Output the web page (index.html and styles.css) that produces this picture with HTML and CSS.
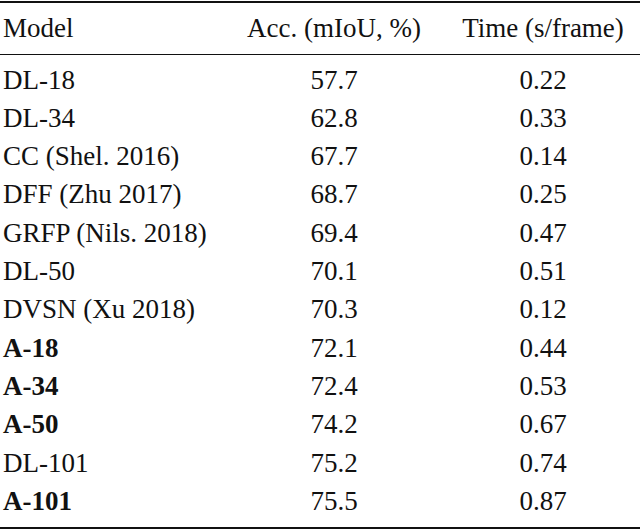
FILE: index.html
```html
<!DOCTYPE html>
<html>
<head>
<meta charset="utf-8">
<link rel="stylesheet" href="styles.css">
</head>
<body>
<table class="results">
  <colgroup>
    <col class="c-model">
    <col class="c-acc">
    <col class="c-time">
  </colgroup>
  <thead>
    <tr><th class="model">Model</th><th>Acc. (mIoU, %)</th><th>Time (s/frame)</th></tr>
  </thead>
  <tbody>
    <tr class="first"><td class="model">DL-18</td><td>57.7</td><td>0.22</td></tr>
    <tr><td class="model">DL-34</td><td>62.8</td><td>0.33</td></tr>
    <tr><td class="model">CC (Shel. 2016)</td><td>67.7</td><td>0.14</td></tr>
    <tr><td class="model">DFF (Zhu 2017)</td><td>68.7</td><td>0.25</td></tr>
    <tr><td class="model">GRFP (Nils. 2018)</td><td>69.4</td><td>0.47</td></tr>
    <tr><td class="model">DL-50</td><td>70.1</td><td>0.51</td></tr>
    <tr><td class="model">DVSN (Xu 2018)</td><td>70.3</td><td>0.12</td></tr>
    <tr><td class="model bold">A-18</td><td>72.1</td><td>0.44</td></tr>
    <tr><td class="model bold">A-34</td><td>72.4</td><td>0.53</td></tr>
    <tr><td class="model bold">A-50</td><td>74.2</td><td>0.67</td></tr>
    <tr><td class="model">DL-101</td><td>75.2</td><td>0.74</td></tr>
    <tr class="last"><td class="model bold">A-101</td><td>75.5</td><td>0.87</td></tr>
  </tbody>
</table>
</body>
</html>
```
FILE: styles.css
```css
html, body {
  margin: 0;
  padding: 0;
  background: #fff;
}
body {
  font-family: "Liberation Serif", "Times New Roman", serif;
  font-size: 27px;
  color: #111;
}
.results {
  width: 640px;
  border-collapse: collapse;
  table-layout: fixed;
  margin-top: 1px;
  border-top: 2px solid #111;
  border-bottom: 2.5px solid #111;
}
.c-model { width: 222px; }
.c-acc { width: 224px; }
.c-time { width: 194px; }
.results th,
.results td {
  padding: 0;
  line-height: 38.3px;
  text-align: center;
  font-weight: normal;
  white-space: nowrap;
}
.results .model {
  text-align: left;
  padding-left: 3px;
}
.results thead th {
  line-height: 37.6px;
  padding-top: 7px;
  padding-bottom: 6px;
  border-bottom: 1.5px solid #111;
}
.results tr.first td { padding-top: 6px; }
.results tr.last td { padding-bottom: 6.5px; }
.results .bold { font-weight: bold; }
```
